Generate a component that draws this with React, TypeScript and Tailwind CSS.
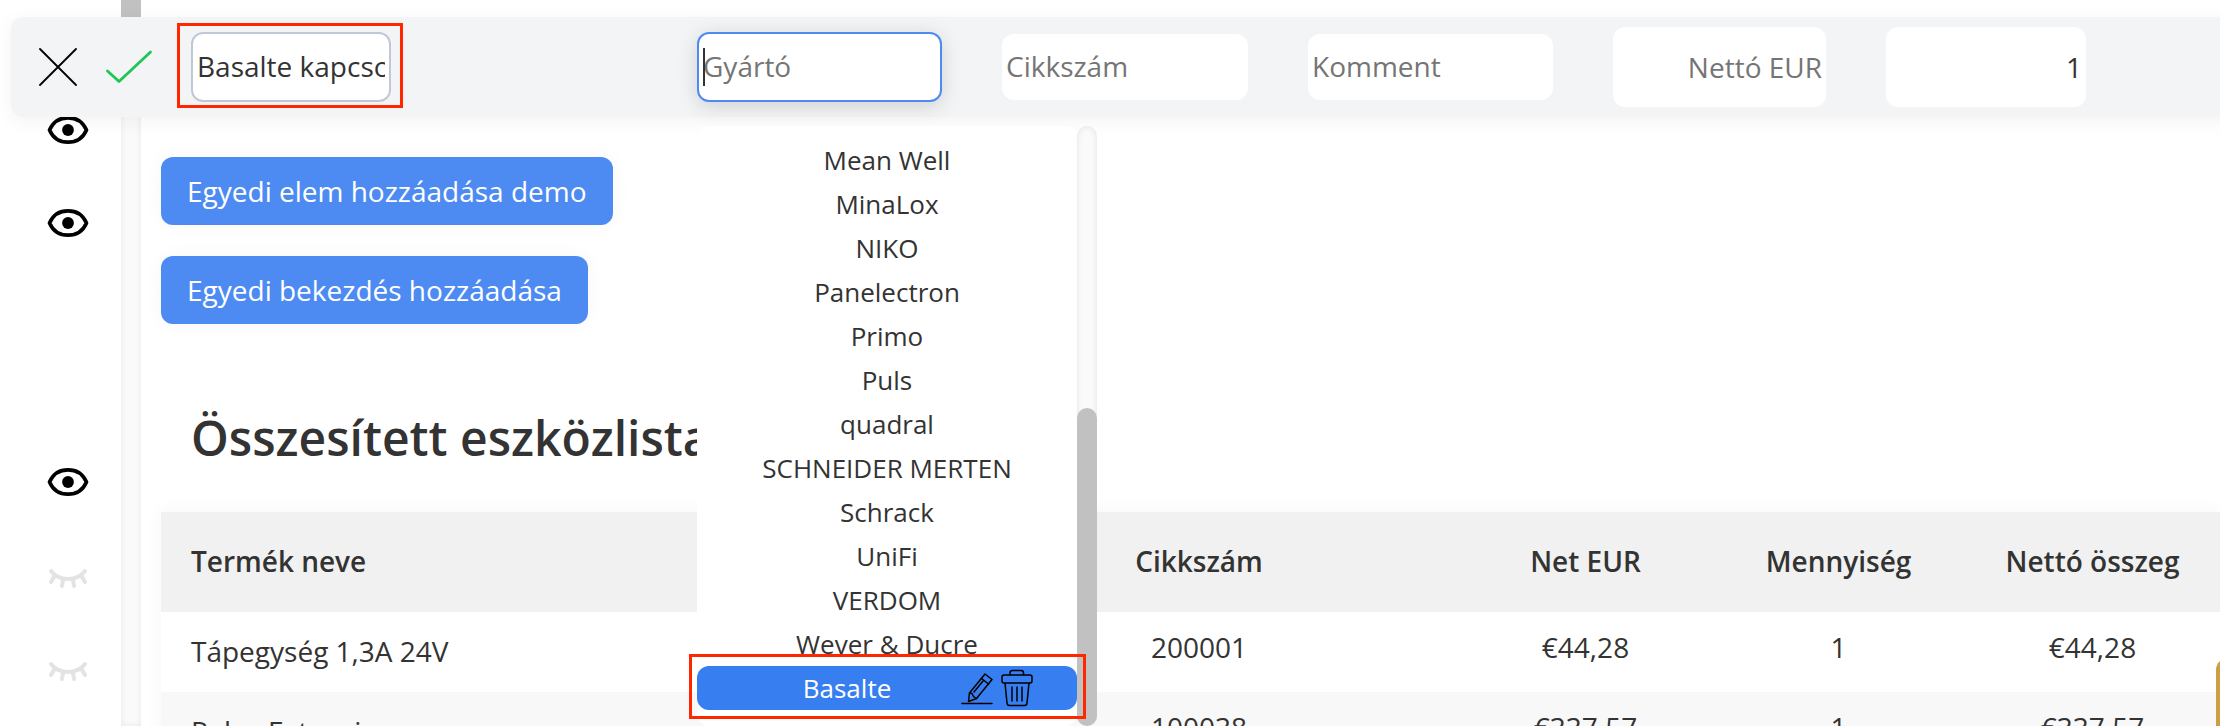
import React from 'react';

const manufacturers = [
  'Mean Well',
  'MinaLox',
  'NIKO',
  'Panelectron',
  'Primo',
  'Puls',
  'quadral',
  'SCHNEIDER MERTEN',
  'Schrack',
  'UniFi',
  'VERDOM',
  'Wever & Ducre',
];

interface DeviceRow {
  name: string;
  sku: string;
  net: string;
  quantity: number;
  total: string;
}

const devices: DeviceRow[] = [
  { name: 'Tápegység 1,3A 24V', sku: '200001', net: '€44,28', quantity: 1, total: '€44,28' },
  { name: 'Relay Extension', sku: '100038', net: '€337,57', quantity: 1, total: '€337,57' },
];

const EyeIcon = () => (
  <svg width="42" height="30" viewBox="0 0 42 30" fill="none">
    <path d="M2.500 15C6 7 13 2.800 21 2.800S36 7 39.500 15C36 23 29 27.200 21 27.200S6 23 2.500 15Z" stroke="#000" strokeWidth="3.700" strokeLinejoin="round" />
    <circle cx="21" cy="15" r="5.900" fill="#000" />
  </svg>
);

const ClosedEyeIcon = () => (
  <svg width="42" height="30" viewBox="0 0 42 30" fill="none" stroke="#e3e3e3" strokeWidth="4" strokeLinecap="round">
    <path d="M4 11C12 21.500 30 21.500 38 11" />
    <path d="M7.500 16L4 22M16 20L15 26M26 20L27 26M34.500 16L38 22" />
  </svg>
);

const PencilIcon = () => (
  <svg width="32" height="36" viewBox="0 0 32 36" fill="none" stroke="#000" strokeWidth="1.500" strokeLinejoin="round" strokeLinecap="round">
    <path d="M1 33.500H31" />
    <path d="M7.500 31.500L8.500 23L24 4L31 9.500L15.500 28.500Z" />
    <path d="M8.500 23L11 23.500L12.500 26.500L15.500 28.500M20.500 8.500L27.500 14M13 22L22 11" />
  </svg>
);

const TrashIcon = () => (
  <svg width="32" height="38" viewBox="0 0 32 38" fill="none" stroke="#000" strokeWidth="1.500" strokeLinejoin="round">
    <path d="M9 6V4Q9 1.500 11.500 1.500H20Q22.500 1.500 22.500 4V6" />
    <rect x="1" y="6" width="30" height="8" rx="2" />
    <path d="M4 14L6 34Q6.200 36.500 8.500 36.500H23.500Q25.800 36.500 26 34L28 14" />
    <path d="M11 17.500V32.500M16 17.500V32.500M21 17.500V32.500" />
  </svg>
);

const ManufacturerMenu = () => (
  <div className="absolute left-0 top-full mt-6 flex h-[600px] w-[400px]">
    <ul className="flex flex-1 flex-col justify-end rounded-xl bg-white pb-4 text-center text-[26px] leading-[44px]">
      {manufacturers.map((name) => (
        <li key={name}>{name}</li>
      ))}
      <li className="relative flex h-11 items-center rounded-xl bg-[#377ef0] pl-9 pr-11 text-white">
        <span className="flex-1">Basalte</span>
        <button type="button" aria-label="Szerkesztés">
          <PencilIcon />
        </button>
        <button type="button" aria-label="Törlés" className="ml-2">
          <TrashIcon />
        </button>
        <span className="pointer-events-none absolute -bottom-[9px] -left-2 -right-[9px] -top-3 z-10 border-3 border-[#ff2600]" />
      </li>
    </ul>
    <div className="flex w-5 flex-col justify-end rounded-full bg-[#fafafa] shadow-[inset_0_0_6px_rgba(0,0,0,0.1)]">
      <div className="h-[318px] rounded-full bg-[#c1c1c1]" />
    </div>
  </div>
);

const EditBar = () => (
  <form className="absolute -right-10 left-[11px] top-[17px] z-10 flex h-[100px] items-center rounded-l-xl bg-[#f3f4f6] pr-10 shadow-[0_4px_20px_rgba(0,0,0,0.05)]">
    <div className="flex w-[180px] items-center gap-7 pl-7">
      <button type="button" aria-label="Mégse">
        <svg width="38" height="38" viewBox="0 0 38 38" stroke="#000" strokeWidth="1.800" strokeLinecap="round">
          <path d="M1 1L37 37M37 1L1 37" />
        </svg>
      </button>
      <button type="submit" aria-label="Mentés">
        <svg width="48" height="36" viewBox="0 0 48 36" fill="none" stroke="#1fc652" strokeWidth="2.800" strokeLinecap="round" strokeLinejoin="round">
          <path d="M2.500 22L14 32.500L45.500 3" />
        </svg>
      </button>
    </div>
    <div className="grid flex-1 grid-cols-[446fr_245fr_246fr_245fr_213fr_200fr_74fr] items-center gap-[60px]">
      <div className="relative w-[200px]">
        <input
          aria-label="Termék neve"
          defaultValue="Basalte kapcsoló"
          className="h-[70px] w-full rounded-xl border-2 border-[#c0c8d8] bg-white px-1 pb-0.5 outline-none"
        />
        <span className="pointer-events-none absolute -bottom-[6px] -left-[14px] -right-3 -top-[9px] border-3 border-[#ff2600]" />
      </div>
      <div className="relative">
        <input
          autoFocus
          aria-label="Gyártó"
          placeholder="Gyártó"
          className="h-[70px] w-full rounded-xl border-2 border-[#4d8bf2] bg-white px-1 pb-0.5 caret-transparent shadow-[0_4px_20px_rgba(0,0,0,0.15)] outline-none placeholder:text-[#757575]"
        />
        <span className="pointer-events-none absolute inset-y-4 left-1.5 w-0.5 bg-[#333333]" />
        <ManufacturerMenu />
      </div>
      <input
        aria-label="Cikkszám"
        placeholder="Cikkszám"
        className="h-[66px] w-full rounded-xl bg-white px-1 pb-0.5 outline-none placeholder:text-[#757575]"
      />
      <input
        aria-label="Komment"
        placeholder="Komment"
        className="h-[66px] w-full rounded-xl bg-white px-1 pb-0.5 outline-none placeholder:text-[#757575]"
      />
      <input
        aria-label="Nettó EUR"
        placeholder="Nettó EUR"
        className="h-20 w-full rounded-xl bg-white px-1 text-right outline-none placeholder:text-[#757575]"
      />
      <input
        aria-label="Mennyiség"
        defaultValue="1"
        className="h-20 w-full rounded-xl bg-white px-1 text-right outline-none"
      />
    </div>
  </form>
);

const Sidebar = () => (
  <aside className="flex w-[121px] shrink-0 flex-col items-center gap-[63px] pl-[14px] pt-[115px]">
    <button type="button" aria-label="Elrejtés"><EyeIcon /></button>
    <button type="button" aria-label="Elrejtés"><EyeIcon /></button>
    <button type="button" aria-label="Elrejtés" className="mt-[166px]"><EyeIcon /></button>
    <button type="button" aria-label="Megjelenítés"><ClosedEyeIcon /></button>
    <button type="button" aria-label="Megjelenítés"><ClosedEyeIcon /></button>
  </aside>
);

const DeviceTable = () => (
  <table className="w-full table-fixed shadow-[0_0_20px_rgba(0,0,0,0.04)]">
    <colgroup>
      <col className="w-[778px]" />
      <col className="w-[520px]" />
      <col className="w-[253px]" />
      <col className="w-[253px]" />
      <col className="w-[255px]" />
    </colgroup>
    <thead>
      <tr className="h-[100px] bg-[#f1f1f1]">
        <th className="pb-0.5 pl-[30px] text-left font-semibold">Termék neve</th>
        <th className="pb-0.5 font-semibold">Cikkszám</th>
        <th className="pb-0.5 font-semibold">Net EUR</th>
        <th className="pb-0.5 font-semibold">Mennyiség</th>
        <th className="pb-0.5 font-semibold">Nettó összeg</th>
      </tr>
    </thead>
    <tbody className="text-center">
      {devices.map((device) => (
        <tr key={device.sku} className="h-20 bg-white align-top even:bg-[#f8f8f8]">
          <td className="pl-[30px] pt-5 text-left">{device.name}</td>
          <td className="pt-4">{device.sku}</td>
          <td className="pt-4">{device.net}</td>
          <td className="pt-4">{device.quantity}</td>
          <td className="pt-4">{device.total}</td>
        </tr>
      ))}
    </tbody>
  </table>
);

const App: React.FC = () => {
  return (
    <div className="relative flex h-screen overflow-hidden bg-white font-['Open_Sans',sans-serif] text-[28px] leading-[38px] text-[#333333]">
      <Sidebar />
      <div className="w-5 shrink-0 bg-[#fafafa] shadow-[inset_0_0_6px_rgba(0,0,0,0.08)]">
        <div className="h-[60px] bg-[#c1c1c1]" />
      </div>
      <main className="min-w-0 flex-1 pl-5 pt-[157px]">
        <div className="flex flex-col items-start gap-[31px]">
          <button type="button" className="rounded-xl bg-[#4d8bf2] px-[26px] py-[15px] text-white shadow-[0_0_20px_rgba(0,0,0,0.04)]">
            Egyedi elem hozzáadása demo
          </button>
          <button type="button" className="rounded-xl bg-[#4d8bf2] px-[26px] py-[15px] text-white shadow-[0_0_20px_rgba(0,0,0,0.04)]">
            Egyedi bekezdés hozzáadása
          </button>
        </div>
        <h1 className="mb-10 mt-20 pl-[30px] text-5xl font-semibold leading-[68px]">Összesített eszközlista</h1>
        <DeviceTable />
      </main>
      <EditBar />
      <button type="button" aria-label="Menü" className="absolute -right-24 top-[658px] h-[100px] w-[100px] rounded-xl bg-[#cc9f46]" />
    </div>
  );
};

export default App;
